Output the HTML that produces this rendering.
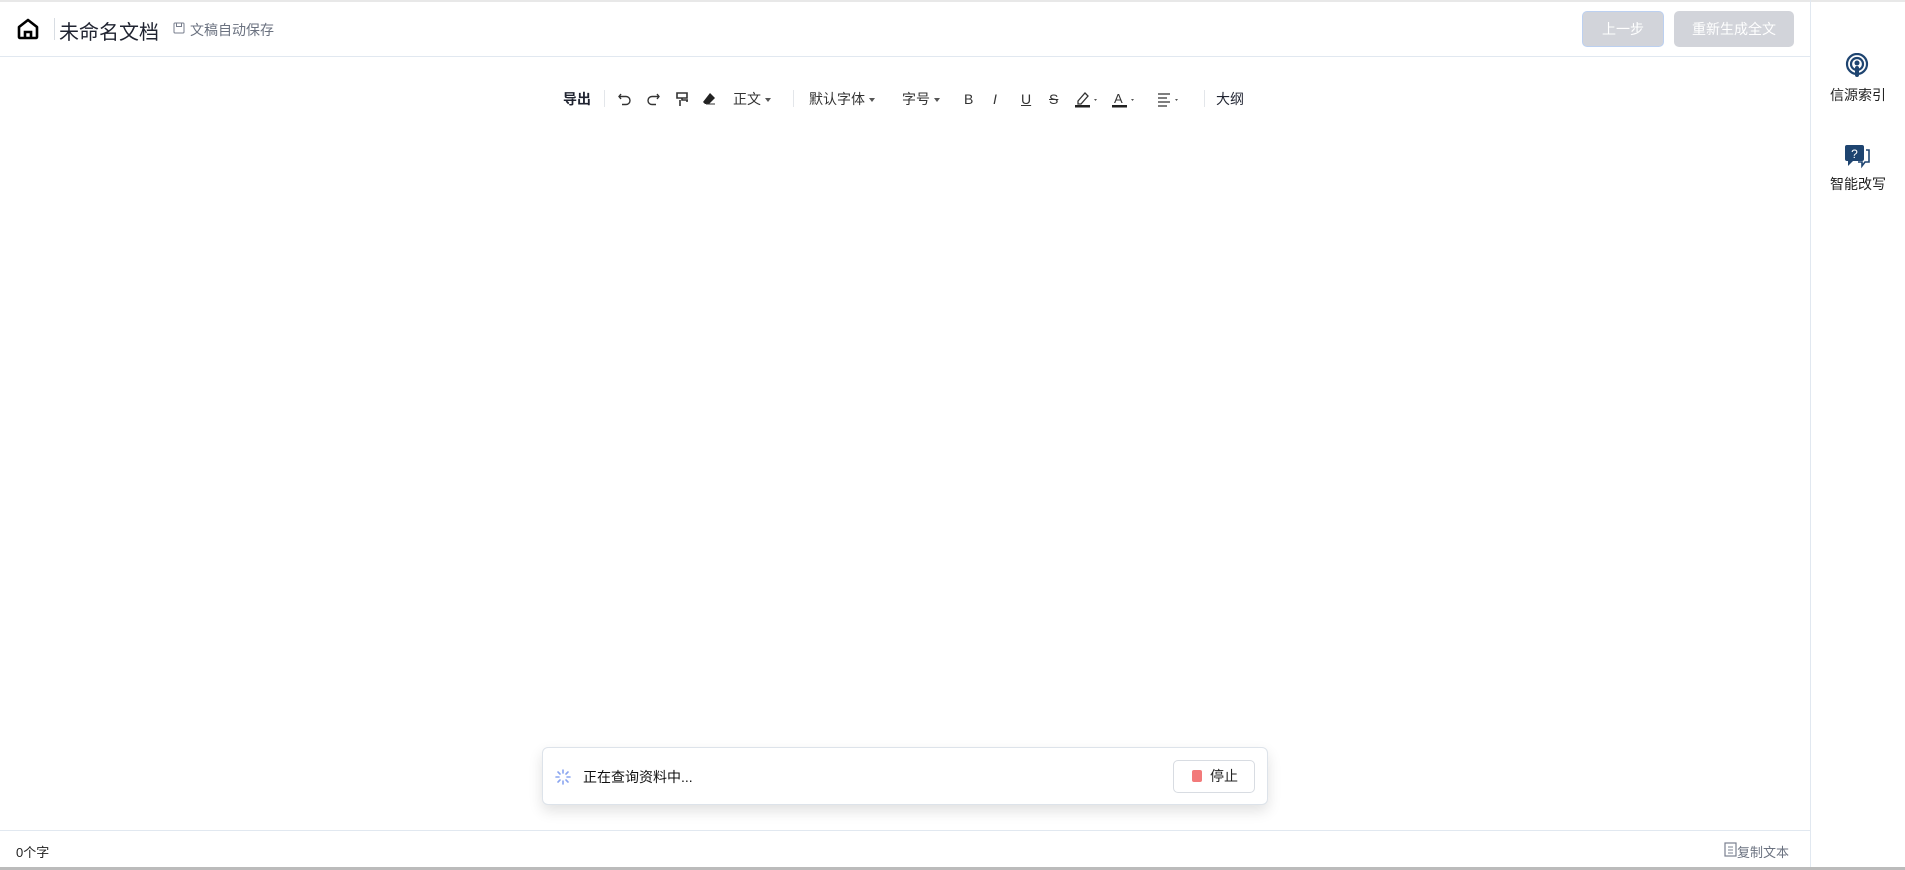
<!DOCTYPE html>
<html><head><meta charset="utf-8"><style>
*{margin:0;padding:0;box-sizing:border-box}
body{width:1905px;height:870px;background:#fff;font-family:"Liberation Sans","Noto Sans CJK SC",sans-serif;position:relative;overflow:hidden;color:#222}
.a{position:absolute;white-space:nowrap}
.tb{top:89px;font-size:14px;color:#333;line-height:20px}
.car{display:inline-block;width:0;height:0;border-left:3px solid transparent;border-right:3px solid transparent;border-top:4px solid #555;vertical-align:middle;margin-left:4px}
.sep{position:absolute;top:90px;width:1px;height:17px;background:#e3e6ea}
</style></head><body>
<div class="a" style="left:0;top:0;width:1905px;height:2px;background:#e8e8e8"></div>
<!-- header -->
<svg class="a" style="left:16px;top:17px" width="24" height="24" viewBox="0 0 24 24"><path d="M3 10L12 3l9 7v10a1 1 0 0 1-1 1H4a1 1 0 0 1-1-1z" fill="none" stroke="#000" stroke-width="2.6" stroke-linejoin="round"/><path d="M9 21v-6h6v6" fill="none" stroke="#000" stroke-width="2.6"/></svg>
<div class="a" style="left:54px;top:18px;width:1px;height:22px;background:#d8dde3"></div>
<div class="a" style="left:59px;top:16px;font-size:20px;color:#1f2330">未命名文档</div>
<svg class="a" style="left:173px;top:22px" width="12" height="12" viewBox="0 0 12 12"><rect x="1" y="1" width="10" height="10" rx="1" fill="none" stroke="#777d8c"/><rect x="3.5" y="1" width="5" height="3.5" fill="none" stroke="#777d8c"/></svg>
<div class="a" style="left:190px;top:20px;font-size:14px;color:#6b7280">文稿自动保存</div>
<div class="a" style="left:1582px;top:11px;width:82px;height:36px;background:#d2d4da;border:1px solid #bcd0f0;border-radius:5px;color:#fff;font-size:14px;text-align:center;line-height:34px">上一步</div>
<div class="a" style="left:1674px;top:11px;width:120px;height:36px;background:#d2d4da;border-radius:5px;color:#fff;font-size:14px;text-align:center;line-height:36px">重新生成全文</div>
<div class="a" style="left:0;top:56px;width:1810px;height:1px;background:#e1e8f0"></div>
<!-- sidebar -->
<div class="a" style="left:1810px;top:0;width:1px;height:870px;background:#e1e8f0"></div>
<svg class="a" style="left:1845px;top:53px" width="24" height="26" viewBox="0 0 24 26"><circle cx="12" cy="11" r="10" fill="none" stroke="#1e4470" stroke-width="2.2"/><circle cx="12" cy="11" r="6" fill="none" stroke="#1e4470" stroke-width="2.2"/><circle cx="12" cy="10" r="2.5" fill="#1e4470"/><rect x="10" y="13" width="4" height="11" rx="2" fill="#1e4470"/></svg>
<div class="a" style="left:1830px;top:85px;font-size:14px;color:#222">信源索引</div>
<svg class="a" style="left:1844px;top:144px" width="28" height="26" viewBox="0 0 28 26"><rect x="1" y="1" width="19" height="16" rx="2" fill="#1e4470"/><path d="M4 17v5l5-5z" fill="#1e4470"/><text x="10.5" y="14" font-size="12" fill="#fff" text-anchor="middle" font-family="Liberation Sans">?</text><path d="M22 6h3v12h-4l-3 4v-4h-4" fill="none" stroke="#1e4470" stroke-width="1.6"/></svg>
<div class="a" style="left:1830px;top:174px;font-size:14px;color:#222">智能改写</div>
<!-- toolbar -->
<div class="a tb" style="left:563px;font-weight:bold;color:#1f2330">导出</div>
<div class="sep" style="left:604px"></div>
<svg class="a" style="left:617px;top:91px" width="16" height="16" viewBox="0 0 16 16"><path d="M4 3L2 5.5 4 8M2 5.5h7a4 4 0 0 1 0 8H5" fill="none" stroke="#333" stroke-width="1.4"/></svg>
<svg class="a" style="left:645px;top:91px" width="16" height="16" viewBox="0 0 16 16"><path d="M12 3l2 2.5L12 8M14 5.5H7a4 4 0 0 0 0 8h4" fill="none" stroke="#333" stroke-width="1.4"/></svg>
<svg class="a" style="left:675px;top:91px" width="15" height="16" viewBox="0 0 15 16"><path d="M2 2h10v5H2zM7 7v2h6M12 9v2M5 9v6" fill="none" stroke="#333" stroke-width="1.6"/></svg>
<svg class="a" style="left:701px;top:91px" width="16" height="16" viewBox="0 0 16 16"><path d="M9 2l5 5-6 6H4l-2-2z" fill="#222"/><path d="M5 13h9" stroke="#333"/></svg>
<div class="a tb" style="left:733px">正文<span class="car"></span></div>
<div class="sep" style="left:793px"></div>
<div class="a tb" style="left:809px">默认字体<span class="car"></span></div>
<div class="a tb" style="left:902px">字号<span class="car"></span></div>
<div class="a tb" style="left:964px;font-size:14px">B</div>
<div class="a tb" style="left:993px;font-style:italic">I</div>
<div class="a tb" style="left:1021px;text-decoration:underline">U</div>
<div class="a tb" style="left:1049px;text-decoration:line-through">S</div>
<svg class="a" style="left:1074px;top:90px" width="28" height="18" viewBox="0 0 28 18"><path d="M4 11l7-8 3 3-7 8H4z" fill="none" stroke="#333" stroke-width="1.3"/><rect x="1" y="15" width="15" height="2.5" fill="#222"/><path d="M20 9l3 0-1.5 2z" fill="#555"/></svg>
<svg class="a" style="left:1111px;top:90px" width="28" height="18" viewBox="0 0 28 18"><text x="3" y="13" font-size="13" fill="#333" font-family="Liberation Sans">A</text><rect x="1" y="15" width="15" height="2.5" fill="#222"/><path d="M20 9l3 0-1.5 2z" fill="#555"/></svg>
<svg class="a" style="left:1156px;top:90px" width="28" height="18" viewBox="0 0 28 18"><path d="M2 4h12M2 8h9M2 12h12M2 16h9" stroke="#333" stroke-width="1.3"/><path d="M19 9l3 0-1.5 2z" fill="#555"/></svg>
<div class="sep" style="left:1204px"></div>
<div class="a tb" style="left:1216px;color:#1f2330">大纲</div>
<!-- popup -->
<div class="a" style="left:542px;top:747px;width:726px;height:58px;border:1px solid #dde3ea;border-radius:6px;background:#fff;box-shadow:0 6px 14px rgba(0,0,0,.12)"></div>
<svg class="a" style="left:555px;top:769px" width="16" height="16" viewBox="0 0 16 16" stroke="#8aa5f0" stroke-width="1.6" stroke-linecap="round"><path d="M8 1v3M8 12v3M1 8h3M12 8h3M3 3l2 2M11 11l2 2M13 3l-2 2M5 11l-2 2"/></svg>
<div class="a" style="left:583px;top:767px;font-size:14px;color:#111">正在查询资料中...</div>
<div class="a" style="left:1173px;top:760px;width:82px;height:33px;border:1px solid #d8dce2;border-radius:5px;font-size:14px;line-height:31px;padding-left:36px;color:#222">停止</div>
<div class="a" style="left:1192px;top:770px;width:10px;height:12px;border-radius:2px;background:#f27a7a"></div>
<!-- footer -->
<div class="a" style="left:0;top:830px;width:1810px;height:1px;background:#e1e8f0"></div>
<div class="a" style="left:16px;top:842px;font-size:13px;color:#222">0个字</div>
<svg class="a" style="left:1723px;top:842px" width="14" height="15" viewBox="0 0 14 15"><rect x="2" y="1" width="11" height="13" fill="none" stroke="#7a8090" stroke-width="1.2"/><path d="M5 5h5M5 8h5M5 11h5" stroke="#7a8090"/></svg>
<div class="a" style="left:1737px;top:842px;font-size:13px;color:#6b7280">复制文本</div>
<div class="a" style="left:0;top:867px;width:1905px;height:3px;background:#bbb"></div>
</body></html>
